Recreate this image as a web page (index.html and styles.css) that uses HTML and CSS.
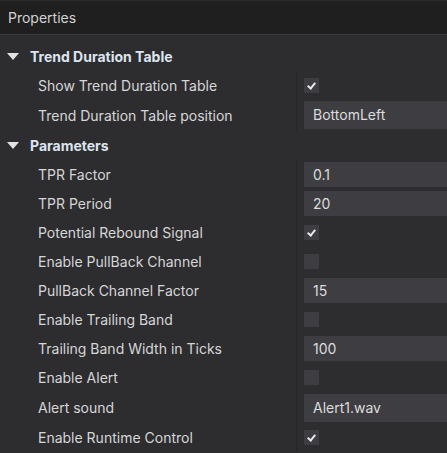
FILE: index.html
```html
<!DOCTYPE html>
<html lang="en">
  <head>
    <meta charset="UTF-8" />
    <title>Properties</title>
    <link rel="stylesheet" href="styles.css">
  </head>
  <body>
    <div class="panel">
      <div class="panel-title">Properties</div>

      <div class="grid">
        <!-- Trend Duration Table group -->
        <div class="section"><span class="caret"></span>Trend Duration Table</div>
        <div class="group">
          <div class="row">
            <div class="label">Show Trend Duration Table</div>
            <div class="value"><span class="check on"></span></div>
          </div>
          <div class="row tall">
            <div class="label">Trend Duration Table position</div>
            <div class="value"><div class="field combo">BottomLeft</div></div>
          </div>
        </div>

        <!-- Parameters group -->
        <div class="section"><span class="caret"></span>Parameters</div>
        <div class="group">
          <div class="row">
            <div class="label">TPR Factor</div>
            <div class="value"><div class="field">0.1</div></div>
          </div>
          <div class="row">
            <div class="label">TPR Period</div>
            <div class="value"><div class="field">20</div></div>
          </div>
          <div class="row">
            <div class="label">Potential Rebound Signal</div>
            <div class="value"><span class="check on"></span></div>
          </div>
          <div class="row">
            <div class="label">Enable PullBack Channel</div>
            <div class="value"><span class="check"></span></div>
          </div>
          <div class="row">
            <div class="label">PullBack Channel Factor</div>
            <div class="value"><div class="field">15</div></div>
          </div>
          <div class="row">
            <div class="label">Enable Trailing Band</div>
            <div class="value"><span class="check"></span></div>
          </div>
          <div class="row">
            <div class="label">Trailing Band Width in Ticks</div>
            <div class="value"><div class="field">100</div></div>
          </div>
          <div class="row">
            <div class="label">Enable Alert</div>
            <div class="value"><span class="check"></span></div>
          </div>
          <div class="row taller">
            <div class="label">Alert sound</div>
            <div class="value"><div class="field combo">Alert1.wav</div></div>
          </div>
          <div class="row">
            <div class="label">Enable Runtime Control</div>
            <div class="value"><span class="check on"></span></div>
          </div>
        </div>
      </div>
    </div>
  </body>
</html>
```
FILE: styles.css
```css
body {
  margin: 0;
  background: #2d2d30;
  font-family: Inter, "Noto Sans", sans-serif;
  font-size: 14px;
  color: #d6d6d6;
  overflow: hidden;
}

.panel {
  width: 447px;
  height: 453px;
}

.panel-title {
  height: 33px;
  line-height: 33px;
  padding-left: 8px;
  background: #1f1f1f;
  border-top: 1px solid #2a2a2a;
  border-bottom: 1px solid #3a3a3c;
  color: #d2d2d2;
}

.grid {
  padding-top: 6px;
}

.section {
  display: flex;
  align-items: center;
  height: 30px;
  font-weight: 700;
  color: #dde4ef;
}

.caret {
  width: 0;
  height: 0;
  margin: 0 11px 0 7px;
  border-left: 6px solid transparent;
  border-right: 6px solid transparent;
  border-top: 7px solid #e2e2e2;
}

.row {
  display: flex;
  height: 29px;
}

.row.tall {
  height: 30px;
}

.row.taller {
  height: 31px;
}

.label {
  width: 258px;
  padding-left: 38px;
  display: flex;
  align-items: center;
  border-right: 1px solid #252527;
  white-space: nowrap;
}

.value {
  flex: 1;
  display: flex;
  align-items: center;
  padding-left: 7px;
  overflow: hidden;
}

.field {
  flex: 1;
  height: 25px;
  line-height: 25px;
  padding-left: 9px;
  background: #3e3e42;
  color: #dcdcdc;
}

.field.combo {
  height: 28px;
  line-height: 28px;
}

.check {
  width: 15px;
  height: 15px;
  background: #3e3e42;
  position: relative;
}

/* small tick drawn from two borders */
.check.on::after {
  content: "";
  position: absolute;
  left: 5px;
  top: 3px;
  width: 3px;
  height: 6px;
  border-right: 2px solid #e8e8e8;
  border-bottom: 2px solid #e8e8e8;
  transform: rotate(40deg);
}
```
